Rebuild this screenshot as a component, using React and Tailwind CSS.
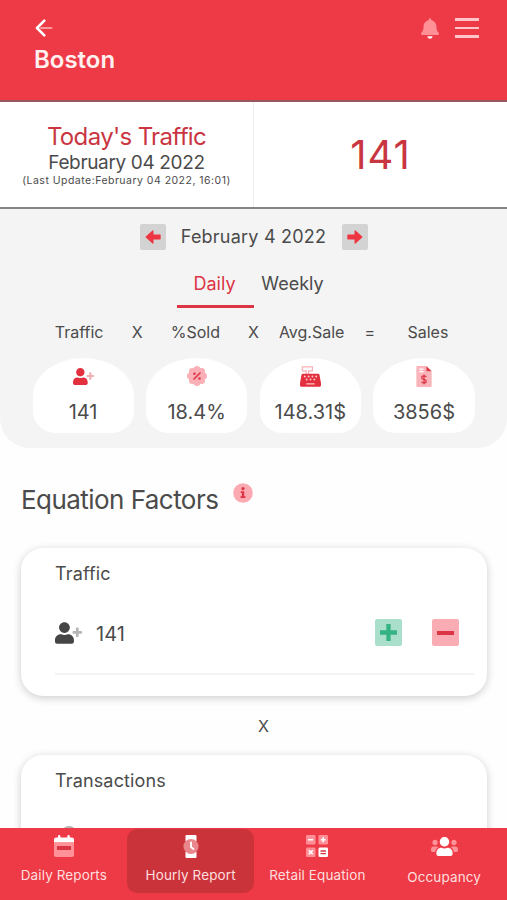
const UserPlus = ({ className }) => (
	<svg viewBox="0 0 640 512" fill="currentColor" className={className}>
		<path
			opacity=".4"
			d="M624 208h-64v-64c0-8.800-7.200-16-16-16h-32c-8.800 0-16 7.200-16 16v64h-64c-8.800 0-16 7.200-16 16v32c0 8.800 7.200 16 16 16h64v64c0 8.800 7.200 16 16 16h32c8.800 0 16-7.200 16-16v-64h64c8.800 0 16-7.200 16-16v-32c0-8.800-7.200-16-16-16z"
		/>
		<path d="M224 256c70.700 0 128-57.300 128-128S294.700 0 224 0 96 57.300 96 128s57.300 128 128 128zm89.600 32h-16.700c-22.200 10.200-46.900 16-72.900 16s-50.600-5.800-72.900-16h-16.700C60.200 288 0 348.200 0 422.400V464c0 26.500 21.500 48 48 48h352c26.500 0 48-21.500 48-48v-41.600c0-74.200-60.200-134.400-134.400-134.400z" />
	</svg>
);

const Bell = () => (
	<svg viewBox="0 0 448 512" className="w-[18px] h-[21px]">
		<path
			fill="#ff9095"
			d="M439.390 362.290c-19.320-20.760-55.470-51.990-55.470-154.290 0-77.700-54.480-139.900-127.940-155.160V32c0-17.670-14.320-32-31.980-32s-31.980 14.330-31.980 32v20.840C118.560 68.100 64.080 130.300 64.080 208c0 102.300-36.150 133.530-55.470 154.290-6 6.450-8.660 14.160-8.610 21.710.110 16.400 12.980 32 32.100 32h383.800c19.120 0 32-15.600 32.100-32 .050-7.550-2.610-15.270-8.610-21.710z"
		/>
		<path fill="#fff" d="M224 512c35.320 0 63.970-28.650 63.970-64H160.030c0 35.350 28.650 64 63.970 64z" />
	</svg>
);

const BackArrow = () => (
	<svg viewBox="0 0 18 18" fill="none" strokeLinecap="round" className="w-[18px] h-[18px] ml-px">
		<path d="M6 9h10.500" stroke="#f9989d" strokeWidth="2.200" />
		<path d="M9.300 1.700 2 9l7.300 7.300" stroke="#fff" strokeWidth="2.600" strokeLinejoin="round" />
	</svg>
);

const BadgePercent = () => (
	<svg viewBox="0 0 20 20" className="w-5 h-5">
		<g fill="#fab0b6">
			<circle cx="10" cy="10" r="8.300" />
			<circle cx="10" cy="3.300" r="3.300" />
			<circle cx="14.700" cy="5.300" r="3.300" />
			<circle cx="16.700" cy="10" r="3.300" />
			<circle cx="14.700" cy="14.700" r="3.300" />
			<circle cx="10" cy="16.700" r="3.300" />
			<circle cx="5.300" cy="14.700" r="3.300" />
			<circle cx="3.300" cy="10" r="3.300" />
			<circle cx="5.300" cy="5.300" r="3.300" />
		</g>
		<path d="m7 13 6-6" stroke="#dc3545" strokeWidth="1.600" strokeLinecap="round" />
		<circle cx="7.500" cy="7.700" r="1.300" fill="#dc3545" />
		<circle cx="12.500" cy="12.500" r="1.300" fill="#dc3545" />
	</svg>
);

const CashRegister = () => (
	<svg viewBox="0 0 22 22" className="w-[21px] h-[21px]">
		<path d="M2.500 1h10.500v4.200H9v3.800H6.500V5.200h-4z" fill="#fff" stroke="#f7b0b6" strokeWidth="1.300" />
		<path d="M3 8h16q1.200 0 1.400 1.200L22 18v2.500q0 1.200-1.200 1.200H1.200Q0 21.700 0 20.500V18l1.600-8.800Q1.800 8 3 8z" fill="#e3303f" />
		<g fill="#ffc9cd">
			<circle cx="5" cy="11" r="1" />
			<circle cx="9" cy="11" r="1" />
			<circle cx="13" cy="11" r="1" />
			<circle cx="17" cy="11" r="1" />
			<circle cx="7" cy="14.200" r="1" />
			<circle cx="11" cy="14.200" r="1" />
			<circle cx="15" cy="14.200" r="1" />
			<rect x="6.500" y="18" width="9" height="1.400" rx=".6" />
		</g>
	</svg>
);

const Invoice = () => (
	<svg viewBox="0 0 16 22" className="w-4 h-[21px]">
		<path d="M1 0h9.500v5.500H16V21q0 1-1 1H1q-1 0-1-1V1q0-1 1-1z" fill="#fab4ba" />
		<path d="M10.500 0 16 5.500h-5.500z" fill="#dc3545" />
		<path d="M3 3.200h4.500M3 6h4.500" stroke="#fff" strokeWidth="1.300" />
		<path
			d="M10.500 11.500Q9.800 10.400 8 10.400q-2.400 0-2.400 1.800 0 1.300 2.400 1.900t2.400 1.900q0 1.800-2.400 1.800-1.800 0-2.600-1.200M8 9v10.200"
			fill="none"
			stroke="#dc3545"
			strokeWidth="1.300"
		/>
	</svg>
);

const Info = () => (
	<svg viewBox="0 0 20 20" className="w-5 h-5">
		<circle cx="10" cy="10" r="9.800" fill="#fcaab1" />
		<circle cx="10" cy="5.600" r="1.600" fill="#dc3545" />
		<path d="M7.700 8.300h3.500v5h1.300V15H7.500v-1.700h1.400V10H7.700z" fill="#dc3545" />
	</svg>
);

const Calendar = () => (
	<svg viewBox="0 0 20 22" className="w-5 h-[22px] ml-px">
		<path d="M0 8h20v12q0 2-2 2H2q-2 0-2-2z" fill="#ff9298" />
		<path d="M0 7.500V4.500q0-2 2-2h2V1q0-1 1.200-1t1.200 1v1.500h7V1q0-1 1.200-1t1.200 1v1.500H18q2 0 2 2v3z" fill="#fff" />
		<rect x="3" y="11" width="14" height="4" rx=".5" fill="#d93442" />
	</svg>
);

const Watch = () => (
	<svg viewBox="0 0 16 23" className="w-4 h-[23px] ml-px">
		<path d="M3.500 0h9q1 0 1 1V6h-11V1q0-1 1-1zM2.500 17h11v5q0 1-1 1h-9q-1 0-1-1z" fill="#fff" />
		<circle cx="8" cy="11.500" r="7.600" fill="#e8868b" />
		<path d="M8 7.500v4.500l2.500 2" fill="none" stroke="#fff" strokeWidth="1.900" strokeLinecap="round" />
	</svg>
);

const Calculator = () => (
	<svg viewBox="0 0 22 22" className="w-[22px] h-[22px] ml-px">
		<g fill="#ff8f96">
			<rect width="9.500" height="9.500" rx="1.300" />
			<rect x="12.500" width="9.500" height="9.500" rx="1.300" />
			<rect y="12.500" width="9.500" height="9.500" rx="1.300" />
		</g>
		<rect x="12.500" y="12.500" width="9.500" height="9.500" rx="1.300" fill="#fff" />
		<g stroke="#fff" strokeWidth="1.600">
			<path d="M2.200 4.750h5M14.700 4.750h5M17.250 2.250v5M2.800 15.300l4 4M6.800 15.300l-4 4" />
		</g>
		<path d="M14.500 16h5.500M14.500 18.700H20" stroke="#d93442" strokeWidth="1.300" />
	</svg>
);

const Users = () => (
	<svg viewBox="0 32 640 448" className="w-[27px] h-[19px] ml-px">
		<path
			fill="#ff9298"
			d="M96 224c35.300 0 64-28.700 64-64s-28.700-64-64-64-64 28.700-64 64 28.700 64 64 64zm448 0c35.300 0 64-28.700 64-64s-28.700-64-64-64-64 28.700-64 64 28.700 64 64 64zm32 32h-64c-17.600 0-33.500 7.100-45.100 18.600 40.300 22.100 68.900 62 75.100 109.400h66c17.700 0 32-14.300 32-32v-32c0-35.300-28.700-64-64-64zM173.100 274.600C161.500 263.100 145.600 256 128 256H64c-35.300 0-64 28.700-64 64v32c0 17.700 14.300 32 32 32h65.900c6.300-47.400 34.900-87.300 75.200-109.400z"
		/>
		<path
			fill="#fff"
			d="M320 256c61.900 0 112-50.100 112-112S381.900 32 320 32 208 82.100 208 144s50.100 112 112 112zm76.800 32h-8.300c-20.800 10-43.900 16-68.500 16s-47.600-6-68.500-16h-8.300C179.600 288 128 339.600 128 403.200V432c0 26.500 21.500 48 48 48h288c26.500 0 48-21.500 48-48v-28.800c0-63.600-51.600-115.200-115.200-115.200z"
		/>
	</svg>
);

const DateArrow = ({ flip }) => (
	<button className="w-[26px] h-[26px] rounded-[2px] bg-[#d3d3d4] flex items-center justify-center">
		<svg viewBox="0 0 16 16" className={`w-4 h-4 ${flip ? "rotate-180" : ""}`}>
			<path
				d="M8.500 2v3.500H15q.7 0 .7.700v3.600q0 .7-.7.700H8.500V14q0 1.200-1 .4L.800 8.500q-.5-.5 0-1L7.500 1.600q1-.8 1 .4z"
				fill="#ee3542"
			/>
		</svg>
	</button>
);

const labels = ["Traffic", "X", "%Sold", "X", "Avg.Sale", "=", "Sales"];

const stats = [
	{ value: "141", icon: <UserPlus className="w-[21px] h-[17px] text-[#e3303f]" /> },
	{ value: "18.4%", icon: <BadgePercent /> },
	{ value: "148.31$", icon: <CashRegister /> },
	{ value: "3856$", icon: <Invoice /> },
];

const tabs = [
	{ label: "Daily Reports", icon: <Calendar /> },
	{ label: "Hourly Report", icon: <Watch />, active: true },
	{ label: "Retail Equation", icon: <Calculator /> },
	{ label: "Occupancy", icon: <Users />, low: true },
];

function Header() {
	return (
		<header className="h-[102px] shrink-0 bg-[#ee3a46] border-b-2 border-[#96585c] pl-[34px] pr-[28px] pt-[16px]">
			<div className="flex items-center justify-between h-6">
				<BackArrow />
				<div className="flex items-center gap-[16px]">
					<Bell />
					<div className="w-[24px] flex flex-col gap-[6px]">
						<span className="h-[2.500px] bg-[#ffc5c8]" />
						<span className="h-[2.500px] bg-[#ffc5c8]" />
						<span className="h-[2.500px] bg-[#ffc5c8]" />
					</div>
				</div>
			</div>
			<h1 className="mt-[4px] text-[24px] leading-8 font-semibold text-[#fff0ef]">Boston</h1>
		</header>
	);
}

function TodayTraffic() {
	return (
		<section className="h-[107px] shrink-0 flex border-b-2 border-[#858585] bg-white">
			<div className="w-[254px] border-r border-[#eeeeee] pt-[21px] text-center whitespace-nowrap">
				<div className="text-[24px] leading-[28px] tracking-[-0.650px] text-[#c93541]">Today's Traffic</div>
				<div className="text-[19px] leading-[24px] tracking-[-0.350px]">February 04 2022</div>
				<div className="text-[10.500px] leading-[12px] tracking-[0.480px]">
					(Last Update:February 04 2022, 16:01)
				</div>
			</div>
			<div className="flex-1 text-center text-[40px] tracking-[1px] leading-[105px] text-[#c93541]">141</div>
		</section>
	);
}

function Summary() {
	return (
		<section className="h-[239px] shrink-0 bg-[#f4f4f4] rounded-b-[30px] pt-[14px]">
			<div className="flex items-center justify-center gap-[15px]">
				<DateArrow />
				<span className="text-[18px] w-[146px] text-center tracking-[0.220px] whitespace-nowrap">
					February 4 2022
				</span>
				<DateArrow flip />
			</div>

			<div className="flex items-start mt-[13px] pl-[177px] text-[18px] h-[45px]">
				<button className="w-[77px] pb-px pr-[2px] border-b-[3px] border-[#dc3545] text-[#dc3545] leading-[41px]">
					Daily
				</button>
				<button className="w-[77px] leading-[41px]">Weekly</button>
			</div>

			<div className="grid grid-cols-7 mt-[12px] px-[50px] text-[16px] leading-6 whitespace-nowrap">
				{labels.map((label, i) => (
					<span key={i} className="flex justify-center">
						{label}
					</span>
				))}
			</div>

			<div className="grid grid-cols-4 gap-[12.500px] mt-[14px] px-[32.500px]">
				{stats.map((stat) => (
					<div
						key={stat.value}
						className="h-[75px] bg-white flex flex-col items-center rounded-[50px_50px_22px_22px/38px_38px_22px_22px]"
					>
						<div className="h-[22px] mt-[7px] flex items-center">{stat.icon}</div>
						<span className="text-[20px] leading-6 mt-[13px]">{stat.value}</span>
					</div>
				))}
			</div>
		</section>
	);
}

const Card = ({ title, children }) => (
	<div className="h-[148px] shrink-0 ml-[21px] mr-[20px] rounded-[22px] bg-white shadow-[0_2px_8px_rgba(0,0,0,0.200)] pl-[34px] pr-[13px] pt-[12px]">
		<h3 className="text-[18px] leading-7 tracking-[0.150px]">{title}</h3>
		{children}
	</div>
);

function Factors() {
	return (
		<main className="flex-1 min-h-0 overflow-hidden flex flex-col">
			<div className="flex shrink-0 mt-[31px] pl-[21px] h-10">
				<h2 className="text-[26px] leading-[41px] tracking-[-0.550px] w-[212px] whitespace-nowrap">
					Equation Factors
				</h2>
				<span className="mt-[4px]">
					<Info />
				</span>
			</div>
			<div className="h-[29px] shrink-0" />
			<Card title="Traffic">
				<div className="flex items-center h-[87px] border-b-2 border-[#f3f3f3] pr-[15px] pt-[4px]">
					<UserPlus className="w-[27px] h-[22px] text-[#454545]" />
					<span className="text-[20px] ml-[14px] mt-[3px] flex-1">141</span>
					<button className="w-[27px] h-[27px] rounded-[2px] bg-[#aadfcb] flex items-center justify-center mr-[30px]">
						<svg viewBox="0 0 17 17" className="w-[17px] h-[17px]">
							<path d="M8.500 0v17M0 8.500h17" stroke="#35b384" strokeWidth="4.300" />
						</svg>
					</button>
					<button className="w-[27px] h-[27px] rounded-[2px] bg-[#faacb4] flex items-center justify-center">
						<span className="w-[17px] h-[4px] bg-[#dc3545]" />
					</button>
				</div>
			</Card>
			<div className="h-[59px] shrink-0 text-center text-[16px] leading-[60px] pl-[20px]">X</div>
			<Card title="Transactions">
				<div className="mt-[31px] ml-[6px] w-4 h-4 rounded-full bg-[#b4b4b4]" />
			</Card>
		</main>
	);
}

function TabBar() {
	return (
		<nav className="h-[72px] shrink-0 bg-[#ee3a46] grid grid-cols-4 whitespace-nowrap">
			{tabs.map((tab) => (
				<button
					key={tab.label}
					className={`h-[64px] mt-px flex flex-col items-center rounded-[10px] text-[13.500px] text-[#ffdfdf] ${
						tab.active ? "bg-[#cb333b]" : ""
					}`}
				>
					<span className="h-[22px] mt-[6px] flex items-center">{tab.icon}</span>
					<span className={`leading-5 tracking-[0.120px] ml-px ${tab.low ? "mt-[10px]" : "mt-[8px]"}`}>
						{tab.label}
					</span>
				</button>
			))}
		</nav>
	);
}

export default function App() {
	return (
		<div className="h-[900px] w-full overflow-hidden flex flex-col bg-[#fefefe] text-[#4b4b4b] font-[Inter,sans-serif]">
			<Header />
			<TodayTraffic />
			<Summary />
			<Factors />
			<TabBar />
		</div>
	);
}
